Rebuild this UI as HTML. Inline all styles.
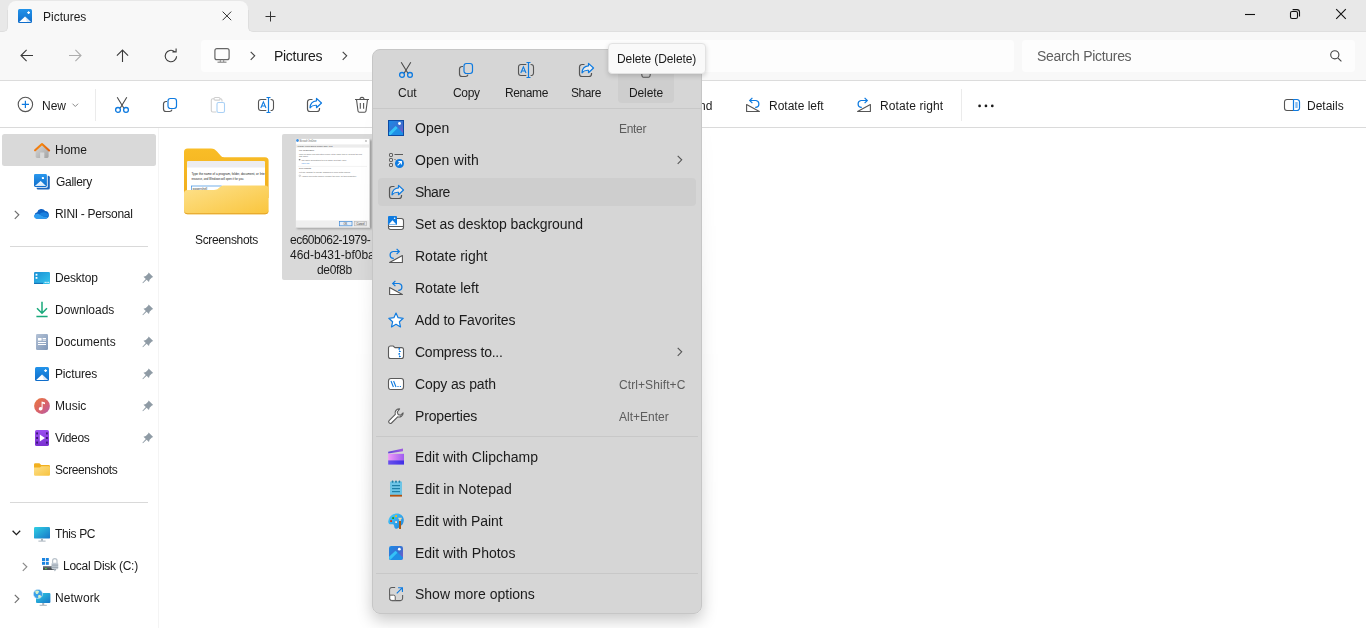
<!DOCTYPE html>
<html>
<head>
<meta charset="utf-8">
<title>Pictures</title>
<style>
*{box-sizing:border-box;margin:0;padding:0}
html,body{width:1366px;height:628px;overflow:hidden;background:#fff}
body{font-family:"Liberation Sans",sans-serif;color:#1a1a1a;position:relative;font-size:12px}
.a{position:absolute}
.t{position:absolute;white-space:pre;line-height:1;color:#1b1b1b;will-change:transform}
svg{position:absolute;overflow:visible}
#titlebar{left:0;top:0;width:1366px;height:32px;background:#e8e8e8}
#tab{left:8px;top:1px;width:240px;height:31px;background:#f8f8f8;border-radius:8px 8px 0 0}
#navbar{left:0;top:32px;width:1366px;height:48px;background:#f8f8f8}
#navline{left:0;top:80px;width:1366px;height:1px;background:#dcdcdc}
#addr{left:201px;top:40px;width:813px;height:32px;background:#fdfdfd;border-radius:4px}
#search{left:1022px;top:40px;width:333px;height:32px;background:#fdfdfd;border-radius:4px}
#toolbar{left:0;top:81px;width:1366px;height:46px;background:#fff}
#toolline{left:0;top:127px;width:1366px;height:1px;background:#dadada}
#sideline{left:158px;top:128px;width:1px;height:500px;background:#f4f4f4}
.sel{background:#d9d9d9;border-radius:2.5px}
.sep{position:absolute;height:1px;background:#d9d9d9}
.vsep{position:absolute;width:1px;background:#ebebeb}
#menu{left:372px;top:49px;width:330px;height:565px;background:#d6d6d6;border-radius:8px;border:1px solid #c6c6c6}
.msep{position:absolute;left:376px;width:322px;height:1px;background:#c8c8c8}
.mi{font-size:14px}
.mk{font-size:12px;color:#5c5c5c}
.sb{font-size:12px}
#tip{left:607.5px;top:43.3px;width:98px;height:31px;background:#f9f9f9;border-radius:4px;border:1px solid #e2e2e2;box-shadow:0 2px 5px rgba(0,0,0,.16)}
</style>
</head>
<body>

<svg width="0" height="0" style="left:-10px;top:-10px">
<defs>
<g id="i-cut" fill="none" stroke-width="1.1">
 <path d="M3.2,0.2 L9.9,11.2 M12.8,0.2 L6.1,11.2" stroke="#4a4a4a"/>
 <circle cx="4" cy="12.9" r="2.4" stroke="#0f7be0" stroke-width="1.3"/><circle cx="12" cy="12.9" r="2.4" stroke="#0f7be0" stroke-width="1.3"/>
</g>
<g id="i-copy" fill="none" stroke-width="1.2">
 <path d="M5,4.5 H4 A2.5,2.5 0 0 0 1.5,7 V12 A2.5,2.5 0 0 0 4,14.5 H7.5 A2.5,2.5 0 0 0 10,12.6" stroke="#555"/>
 <rect x="6" y="1.5" width="8.5" height="10" rx="2.4" stroke="#0f7be0"/>
</g>
<g id="i-rename" fill="none" stroke-width="1.1">
 <path d="M8.3,2.5 H3 A2.5,2.5 0 0 0 0.5,5 V11 A2.5,2.5 0 0 0 3,13.5 H8.3 M12.6,2.5 H13 A2.5,2.5 0 0 1 15.5,5 V11 A2.5,2.5 0 0 1 13,13.5 H12.6" stroke="#555"/>
 <path d="M10.5,0.5 V15.5 M8.5,0.5 H12.5 M8.5,15.5 H12.5" stroke="#0f7be0" stroke-width="1.2"/>
 <path d="M2.8,11 L5.4,4.8 L8,11 M3.8,9 H7" stroke="#0f7be0" stroke-width="1.1"/>
</g>
<g id="i-share" fill="none" stroke-width="1.2">
 <path d="M6.5,2.5 H4 A2.5,2.5 0 0 0 1.5,5 V12 A2.5,2.5 0 0 0 4,14.5 H11 A2.5,2.5 0 0 0 13.5,12 V11" stroke="#555"/>
 <path d="M10.5,1.4 L15.5,6 L10.5,10.7 V8.3 C7.5,8.1 5.4,9 4,10.8 C4.2,7 6.4,4.1 10.5,3.8 Z" stroke="#0f7be0" stroke-linejoin="round" fill="#fff" fill-opacity=".6"/>
</g>
<g id="i-del" fill="none" stroke="#555" stroke-width="1.1">
 <path d="M1,2.5 H15 M6,2.4 A2,2 0 0 1 10,2.4 M2.5,2.5 L4,14 A1.5,1.5 0 0 0 5.5,15.3 H10.5 A1.5,1.5 0 0 0 12,14 L13.5,2.5 M6.3,6 V11.8 M9.6,6 V11.8"/>
</g>
<g id="i-rotl" fill="none" stroke-width="1.1">
 <path d="M0.6,7.6 V14.5 H13.4 Z" stroke="#555" fill="#fff" stroke-linejoin="round"/>
 <path d="M3.8,3.5 H10 A3.5,3.5 0 0 1 10,10.4 H9.2 M6.4,0.9 L3.7,3.5 L6.4,6.1" stroke="#0f7be0" stroke-width="1.2"/>
</g>
<g id="i-rotr" fill="none" stroke-width="1.1">
 <path d="M13.4,7.6 V14.5 H0.6 Z" stroke="#555" fill="#fff" stroke-linejoin="round"/>
 <path d="M10.2,3.5 H4 A3.5,3.5 0 0 0 4,10.4 H4.8 M7.6,0.9 L10.3,3.5 L7.6,6.1" stroke="#0f7be0" stroke-width="1.2"/>
</g>
<linearGradient id="g-ph" x1="0" y1="0" x2="1" y2="1"><stop offset="0" stop-color="#1b8be8"/><stop offset=".55" stop-color="#3a6fd0"/><stop offset="1" stop-color="#8a55c8"/></linearGradient>
<g id="i-photos">
 <rect x="0" y="0" width="16" height="16" fill="#0d4aa3"/>
 <rect x="1" y="1" width="14" height="14" fill="url(#g-ph)"/>
 <path d="M1,13 L8,6 L15,13 V15 H1 Z" fill="#1e8fe6"/>
 <path d="M1,12.6 L7.6,6 L9.6,8 L2.6,15 H1 Z" fill="#35c2f7"/>
 <circle cx="11.5" cy="3.5" r="1.4" fill="#fff"/>
</g>
</defs>
</svg>
<!-- title bar -->
<div class="a" id="titlebar"></div>
<div class="a" style="left:0;top:31px;width:1366px;height:1px;background:#dfdfdf"></div>
<div class="a" id="tab"></div>
<div class="a" style="left:0;top:24px;width:8px;height:8px;background:#f8f8f8"></div>
<div class="a" style="left:0;top:10px;width:8px;height:22px;background:#e8e8e8;border-radius:0 0 5px 0;border-right:1px solid #dedede;border-bottom:1px solid #dedede"></div>
<div class="a" style="left:248px;top:24px;width:8px;height:8px;background:#f8f8f8"></div>
<div class="a" style="left:248px;top:10px;width:8px;height:22px;background:#e8e8e8;border-radius:0 0 0 5px;border-left:1px solid #dedede;border-bottom:1px solid #dedede"></div>
<span class="t" style="left:43px;top:11px;font-size:12px">Pictures</span>


<!-- tab icon -->
<svg style="left:18px;top:9px" width="14" height="14" viewBox="0 0 14 14"><defs><linearGradient id="g-tab" x1="0" y1="0" x2="0" y2="1"><stop offset="0" stop-color="#2293ea"/><stop offset="1" stop-color="#0f6cc9"/></linearGradient></defs>
 <rect x="0" y="0" width="14" height="14" rx="1.5" fill="url(#g-tab)"/>
 <path d="M1.2,13 L7,7.4 L12.8,13 Z" fill="#fff"/><path d="M7,7.4 L12.8,13 H9 Z" fill="#dbe9f7"/>
 <path d="M10.6,2.2 V5 M9.2,3.6 H12" stroke="#fff" stroke-width="1.1"/>
</svg>
<!-- tab close / plus -->
<svg style="left:222px;top:11px" width="10" height="10" viewBox="0 0 10 10"><path d="M0.6,0.6 L9.2,9.2 M9.2,0.6 L0.6,9.2" stroke="#333" stroke-width="1" fill="none"/></svg>
<svg style="left:265px;top:11px" width="11" height="11" viewBox="0 0 11 11"><path d="M5.5,0.5 V10.5 M0.5,5.5 H10.5" stroke="#333" stroke-width="1" fill="none"/></svg>
<!-- window controls -->
<svg style="left:1245px;top:9px" width="10" height="10" viewBox="0 0 10 10"><path d="M0,5.5 H10" stroke="#111" stroke-width="1.1"/></svg>
<svg style="left:1290px;top:9px" width="10" height="10" viewBox="0 0 10 10" fill="none" stroke="#111" stroke-width="1.1"><rect x="0.5" y="2.5" width="7" height="7" rx="1.6"/><path d="M2.6,0.6 H7 A2.5,2.5 0 0 1 9.5,3 V7.4"/></svg>
<svg style="left:1336px;top:9px" width="10" height="10" viewBox="0 0 10 10"><path d="M0.2,0.2 L9.8,9.8 M9.8,0.2 L0.2,9.8" stroke="#111" stroke-width="1.1" fill="none"/></svg>
<!-- nav bar -->
<div class="a" id="navbar"></div>
<div class="a" id="addr"></div>
<div class="a" id="search"></div>
<div class="a" id="navline"></div>
<span class="t" style="left:274px;top:49px;font-size:14px;letter-spacing:-0.3px">Pictures</span>
<span class="t" style="left:1037px;top:49px;font-size:14px;letter-spacing:-0.3px;color:#5f5f5f">Search Pictures</span>


<!-- nav icons -->
<svg style="left:20px;top:49px" width="14" height="13" viewBox="0 0 14 13" fill="none" stroke="#3a3a3a" stroke-width="1.1"><path d="M1,6.5 H13 M6.6,0.9 L1,6.5 L6.6,12.1"/></svg>
<svg style="left:68px;top:49px" width="14" height="13" viewBox="0 0 14 13" fill="none" stroke="#adadad" stroke-width="1.1"><path d="M1,6.5 H13 M7.4,0.9 L13,6.5 L7.4,12.1"/></svg>
<svg style="left:116px;top:49px" width="13" height="14" viewBox="0 0 13 14" fill="none" stroke="#3a3a3a" stroke-width="1.1"><path d="M6.5,1 V13 M0.9,6.6 L6.5,1 L12.1,6.6"/></svg>
<svg style="left:164px;top:49px" width="14" height="14" viewBox="0 0 14 14" fill="none" stroke="#3a3a3a" stroke-width="1.1"><path d="M12.6,7.2 A5.7,5.7 0 1 1 10.6,2.7 M8.4,2.9 H12.1 V-0.6" stroke-linejoin="miter"/></svg>
<svg style="left:214px;top:48px" width="16" height="15" viewBox="0 0 16 15" fill="none" stroke="#666" stroke-width="1.2"><rect x="0.9" y="0.7" width="14.2" height="11" rx="2"/><path d="M3.5,14.2 H12.5" stroke="#8a8a8a"/><path d="M6.3,11.8 V14 M9.7,11.8 V14" stroke="#8a8a8a" stroke-width="1"/></svg>
<svg style="left:250px;top:51px" width="6" height="10" viewBox="0 0 6 10" fill="none" stroke="#444" stroke-width="1.1"><path d="M0.7,0.8 L4.7,4.8 L0.7,8.8"/></svg>
<svg style="left:342px;top:51px" width="6" height="10" viewBox="0 0 6 10" fill="none" stroke="#444" stroke-width="1.1"><path d="M0.7,0.8 L4.7,4.8 L0.7,8.8"/></svg>
<svg style="left:1329px;top:49px" width="14" height="14" viewBox="0 0 14 14" fill="none" stroke="#444" stroke-width="1.1"><circle cx="5.8" cy="5.8" r="4.1"/><path d="M8.8,8.8 L12.4,12.4"/></svg>
<!-- toolbar -->
<div class="a" id="toolbar"></div>
<div class="a" id="toolline"></div>
<span class="t" style="left:42px;top:100px;font-size:12px">New</span>
<div class="vsep" style="left:95px;top:89px;height:32px"></div>
<span class="t" style="left:698.5px;top:100px;font-size:12px">nd</span>
<span class="t" style="left:769px;top:100px;font-size:12px">Rotate left</span>
<span class="t" style="left:879.5px;top:100px;font-size:12px;letter-spacing:.1px">Rotate right</span>
<div class="vsep" style="left:961px;top:89px;height:32px"></div>
<span class="t" style="left:1307px;top:100px;font-size:12px">Details</span>


<!-- toolbar icons -->
<svg style="left:17px;top:96px" width="17" height="17" viewBox="0 0 17 17" fill="none"><circle cx="8.4" cy="8.4" r="7.2" stroke="#555" stroke-width="1.1"/><path d="M8.4,4.8 V12 M4.8,8.4 H12" stroke="#0f7be0" stroke-width="1.2"/></svg>
<svg style="left:72px;top:103px" width="7" height="5" viewBox="0 0 7 5" fill="none" stroke="#8a8a8a" stroke-width="1"><path d="M0.5,0.7 L3.3,3.5 L6.1,0.7"/></svg>
<svg style="left:114px;top:97px" width="16" height="16" viewBox="0 0 16 16"><use href="#i-cut"/></svg>
<svg style="left:162px;top:97px" width="16" height="16" viewBox="0 0 16 16"><use href="#i-copy"/></svg>
<svg style="left:210px;top:97px" width="16" height="16" viewBox="0 0 16 16" fill="none" stroke-width="1.1"><path d="M4,1.8 H2.8 A1.5,1.5 0 0 0 1.3,3.3 V13.5 A1.5,1.5 0 0 0 2.8,15 H6.4 M10,1.8 H10.5 A1.5,1.5 0 0 1 12,3.3 V4.6" stroke="#cfcfcf"/><rect x="4" y="0.5" width="6" height="2.6" rx="1.2" stroke="#cfcfcf"/><rect x="7" y="5.5" width="7.5" height="10" rx="1.6" stroke="#a9d0f5"/></svg>
<svg style="left:258px;top:97px" width="16" height="16" viewBox="0 0 16 16"><use href="#i-rename"/></svg>
<svg style="left:306px;top:97px" width="16" height="16" viewBox="0 0 16 16"><use href="#i-share"/></svg>
<svg style="left:354px;top:97px" width="16" height="16" viewBox="0 0 16 16"><use href="#i-del"/></svg>
<svg style="left:746px;top:97px" width="14" height="15" viewBox="0 0 14 15"><use href="#i-rotl"/></svg>
<svg style="left:857px;top:97px" width="14" height="15" viewBox="0 0 14 15"><use href="#i-rotr"/></svg>
<svg style="left:978px;top:104px" width="16" height="4" viewBox="0 0 16 4" fill="#1a1a1a"><circle cx="1.6" cy="1.9" r="1.35"/><circle cx="7.95" cy="1.9" r="1.35"/><circle cx="14.3" cy="1.9" r="1.35"/></svg>
<svg style="left:1284px;top:99px" width="16" height="12" viewBox="0 0 16 12" fill="none" stroke-width="1.1"><path d="M9.5,0.5 H3 A2.5,2.5 0 0 0 0.5,3 V9 A2.5,2.5 0 0 0 3,11.5 H9.5" stroke="#555"/><path d="M9.5,0.5 H13 A2.5,2.5 0 0 1 15.5,3 V9 A2.5,2.5 0 0 1 13,11.5 H9.5 Z" stroke="#0f7be0" stroke-width="1.2"/><path d="M11.3,4 H13.7 M11.3,6 H13.7 M11.3,8 H13.7" stroke="#0f7be0" stroke-width="1"/></svg>
<!-- sidebar -->
<div class="a" id="sideline"></div>
<div class="a sel" style="left:2px;top:134px;width:154px;height:31.6px"></div>
<span class="t sb" style="left:55px;top:144px">Home</span>
<span class="t sb" style="left:55.5px;top:176px;letter-spacing:-.3px">Gallery</span>
<span class="t sb" style="left:55px;top:208px;letter-spacing:-.3px">RINI - Personal</span>
<div class="sep" style="left:10px;top:246px;width:138px"></div>
<span class="t sb" style="left:55px;top:272px;letter-spacing:-.2px">Desktop</span>
<span class="t sb" style="left:55px;top:304px">Downloads</span>
<span class="t sb" style="left:55px;top:336px">Documents</span>
<span class="t sb" style="left:55px;top:368px;letter-spacing:-.15px">Pictures</span>
<span class="t sb" style="left:55px;top:400px">Music</span>
<span class="t sb" style="left:55.4px;top:432px;letter-spacing:-.35px">Videos</span>
<span class="t sb" style="left:55.2px;top:464px;letter-spacing:-.4px">Screenshots</span>
<div class="sep" style="left:10px;top:502px;width:138px"></div>
<span class="t sb" style="left:54.8px;top:528px;letter-spacing:-.36px">This PC</span>
<span class="t sb" style="left:63px;top:560px;letter-spacing:-.25px">Local Disk (C:)</span>
<span class="t sb" style="left:55px;top:592px;letter-spacing:.14px">Network</span>


<!-- sidebar icons -->
<svg style="left:34px;top:142px" width="17" height="17" viewBox="0 0 17 17"><defs><linearGradient id="g-hm" x1="0" y1="0" x2="1" y2="1"><stop offset="0" stop-color="#d8d8d8"/><stop offset="1" stop-color="#a2a2a2"/></linearGradient><linearGradient id="g-hr" x1="0" y1="0" x2="1" y2="0"><stop offset="0" stop-color="#f07a12"/><stop offset=".45" stop-color="#f5850c"/><stop offset="1" stop-color="#e05f0c"/></linearGradient></defs><path d="M1.6,8.6 L8,2.8 L14.6,8.6 V14.5 A1.4,1.4 0 0 1 13.2,15.9 H10.3 V10.4 H6.1 V15.9 H3 A1.4,1.4 0 0 1 1.6,14.5 Z" fill="url(#g-hm)"/><path d="M1.1,8.3 L8,2 L15.1,8.5" fill="none" stroke="url(#g-hr)" stroke-width="2.1" stroke-linecap="round" stroke-linejoin="round"/></svg>
<svg style="left:34px;top:174px" width="16" height="16" viewBox="0 0 16 16"><defs><linearGradient id="g-gl" x1="0" y1="0" x2="0" y2="1"><stop offset="0" stop-color="#2a98ee"/><stop offset="1" stop-color="#0f6cc9"/></linearGradient><linearGradient id="g-gm" x1="0" y1="0" x2="0" y2="1"><stop offset="0" stop-color="#fff"/><stop offset="1" stop-color="#cfe5fa"/></linearGradient></defs><rect x="2.6" y="1.8" width="13.2" height="13.8" rx="1.5" fill="#1c66bd"/><rect x="0" y="0" width="13.7" height="13.7" rx="1.5" fill="#fff"/><rect x="0" y="0" width="12.9" height="12.9" rx="1.3" fill="url(#g-gl)"/><path d="M0.8,12.1 L6.7,7 L12.1,12.1 Z" fill="url(#g-gm)"/><rect x="7.9" y="3" width="2.1" height="2.1" rx=".4" fill="#fff"/></svg>
<svg style="left:33.1px;top:208.3px" width="16.5" height="11.3" viewBox="0 0 17 12"><path d="M4.2,4.6 A4.6,4.6 0 0 1 12.6,3.2 A3.9,3.9 0 0 1 16.6,7.2 A3.6,3.6 0 0 1 13,11.4 H3.8 A3.5,3.5 0 0 1 4.2,4.6 Z" fill="#0f62c4"/><path d="M0.6,8.6 C1.4,6.4 4,5.4 6.4,6.6 L12,9.6 L15.8,9.4 A3.6,3.6 0 0 1 13,11.4 H3.8 A3.4,3.4 0 0 1 0.6,8.6 Z" fill="#2f9df0"/><path d="M6.4,6.6 C8.4,4.4 12,3.6 14.6,5.6 A3.8,3.8 0 0 1 16.4,8.6 L12,9.6 Z" fill="#1b80de"/></svg>
<svg style="left:14px;top:210px" width="6" height="10" viewBox="0 0 6 10" fill="none" stroke="#6e6e6e" stroke-width="1.2"><path d="M0.8,0.8 L4.8,4.8 L0.8,8.8"/></svg>
<!-- desktop -->
<svg style="left:34px;top:272px" width="16" height="12" viewBox="0 0 16 12"><defs><linearGradient id="g-dt" x1="0" y1="0" x2="1" y2="1"><stop offset="0" stop-color="#1b8fd4"/><stop offset="1" stop-color="#36c6ee"/></linearGradient></defs><rect x="0" y="0" width="16" height="12" rx="1.2" fill="url(#g-dt)"/><rect x="1.6" y="1.8" width="1.8" height="1.8" fill="#fff"/><rect x="1.6" y="5" width="1.8" height="1.8" fill="#fff"/><rect x="10.6" y="9.8" width="1.2" height="1.2" fill="#e6f7ff"/><rect x="12.4" y="9.8" width="1.2" height="1.2" fill="#e6f7ff"/><rect x="14.2" y="9.8" width="1" height="1.2" fill="#e6f7ff"/><rect x="0" y="10.8" width="9" height="1.2" fill="#1474b8"/></svg>
<!-- downloads -->
<svg style="left:36px;top:301px" width="12" height="17" viewBox="0 0 12 17" fill="none" stroke="#19a97b" stroke-width="1.5"><path d="M6,0.8 V12 M1,7.2 L6,12.2 L11,7.2 M0.4,15.6 H11.6"/></svg>
<!-- documents -->
<svg style="left:36px;top:334px" width="12" height="16" viewBox="0 0 12 16"><defs><linearGradient id="g-dc" x1="0" y1="0" x2="1" y2="1"><stop offset="0" stop-color="#b4c2d6"/><stop offset="1" stop-color="#7f97b8"/></linearGradient></defs><rect x="0" y="0" width="12" height="16" rx="1.2" fill="url(#g-dc)"/><g fill="#fff"><rect x="2" y="4" width="3.6" height="2.6"/><rect x="6.6" y="4" width="3.4" height="1"/><rect x="6.6" y="5.6" width="3.4" height="1"/><rect x="2" y="8" width="8" height="1"/><rect x="2" y="10" width="8" height="1"/></g></svg>
<!-- pictures -->
<svg style="left:35px;top:367px" width="14" height="14" viewBox="0 0 14 14"><rect x="0" y="0" width="14" height="14" rx="1.5" fill="url(#g-tab)"/><path d="M1.2,13 L7,7.4 L12.8,13 Z" fill="#fff"/><path d="M7,7.4 L12.8,13 H9 Z" fill="#dbe9f7"/><path d="M10.6,2.2 V5 M9.2,3.6 H12" stroke="#fff" stroke-width="1.1"/></svg>
<!-- music -->
<svg style="left:34px;top:398px" width="16" height="16" viewBox="0 0 16 16"><defs><linearGradient id="g-mu" x1="0" y1="0" x2="1" y2="1"><stop offset="0" stop-color="#ea7a3c"/><stop offset=".55" stop-color="#d9626a"/><stop offset="1" stop-color="#b45cb0"/></linearGradient></defs><circle cx="8" cy="8" r="7.9" fill="url(#g-mu)"/><path d="M7.6,3.6 L11,4.6 V6.2 L8.6,5.6 V10.6 A1.9,1.7 0 1 1 7.6,9.2 Z" fill="#fff"/></svg>
<!-- videos -->
<svg style="left:35px;top:430px" width="14" height="16" viewBox="0 0 14 16"><defs><linearGradient id="g-vd" x1="0" y1="0" x2="0" y2="1"><stop offset="0" stop-color="#9a4ff0"/><stop offset="1" stop-color="#7a30d0"/></linearGradient></defs><rect x="0" y="0" width="14" height="16" rx="1.6" fill="url(#g-vd)"/><g fill="#3b1676"><rect x="1.2" y="2.4" width="1.8" height="2"/><rect x="1.2" y="7" width="1.8" height="2"/><rect x="1.2" y="11.6" width="1.8" height="2"/><rect x="11" y="2.4" width="1.8" height="2"/><rect x="11" y="7" width="1.8" height="2"/><rect x="11" y="11.6" width="1.8" height="2"/></g><path d="M4.8,4.6 L10,8 L4.8,11.4 Z" fill="#fff"/></svg>
<!-- folder small -->
<svg style="left:34px;top:463px" width="16" height="13" viewBox="0 0 16 13"><defs><linearGradient id="g-fs" x1="0" y1="0" x2="1" y2="1"><stop offset="0" stop-color="#fde08a"/><stop offset="1" stop-color="#f7c23e"/></linearGradient></defs><path d="M0,1.4 A1.2,1.2 0 0 1 1.2,0.2 H5.4 L7.2,2 H14.8 A1.2,1.2 0 0 1 16,3.2 V6 H0 Z" fill="#f2b01f"/><path d="M0,4.4 H6 L7.4,3.2 H14.8 A1.2,1.2 0 0 1 16,4.4 V11.6 A1.2,1.2 0 0 1 14.8,12.8 H1.2 A1.2,1.2 0 0 1 0,11.6 Z" fill="url(#g-fs)"/></svg>
<!-- this pc -->
<svg style="left:12.2px;top:530.4px" width="9" height="6" viewBox="0 0 9 6" fill="none" stroke="#1f1f1f" stroke-width="1.3"><path d="M0.6,0.8 L4.4,4.6 L8.2,0.8"/></svg>
<svg style="left:34px;top:527px" width="16" height="15" viewBox="0 0 16 15"><defs><linearGradient id="g-pc" x1="0" y1="0" x2="1" y2="1"><stop offset="0" stop-color="#30d0e4"/><stop offset="1" stop-color="#1876c8"/></linearGradient></defs><rect x="0" y="0" width="16" height="11.6" rx="1.2" fill="url(#g-pc)"/><rect x="7" y="11.6" width="2" height="2.2" fill="#a9b3bd"/><rect x="4.4" y="13.6" width="7.2" height="1" fill="#a9b3bd"/></svg>
<svg style="left:22px;top:562px" width="6" height="10" viewBox="0 0 6 10" fill="none" stroke="#8a8a8a" stroke-width="1.2"><path d="M0.8,0.8 L4.8,4.8 L0.8,8.8"/></svg>
<!-- local disk -->
<svg style="left:42px;top:558px" width="17" height="14" viewBox="0 0 17 14"><g fill="#1b84e0"><rect x="0" y="0" width="3" height="3"/><rect x="3.8" y="0" width="3" height="3"/><rect x="0" y="3.8" width="3" height="3"/><rect x="3.8" y="3.8" width="3" height="3"/></g><rect x="1" y="8.2" width="13" height="3.8" rx=".6" fill="#4a4f55"/><rect x="1" y="8.2" width="13" height="1.2" fill="#7d858d"/><rect x="3.2" y="10" width="1.4" height="1.2" fill="#52e04a"/><path d="M10.6,5 V2.8 A2.2,2.2 0 0 1 15,2.8 V5" fill="none" stroke="#b9c2cb" stroke-width="1.2"/><rect x="9.6" y="4.8" width="6.6" height="6.4" rx=".8" fill="#c3ccd5"/><rect x="9.6" y="6.6" width="6.6" height="1" fill="#98a3ae"/><rect x="9.6" y="8.8" width="6.6" height="1" fill="#98a3ae"/><path d="M11.4,11.2 L12.9,13.6 L14.4,11.2 Z" fill="#aeb8c2"/></svg>
<svg style="left:14px;top:594px" width="6" height="10" viewBox="0 0 6 10" fill="none" stroke="#6e6e6e" stroke-width="1.2"><path d="M0.8,0.8 L4.8,4.8 L0.8,8.8"/></svg>
<!-- network -->
<svg style="left:33px;top:589px" width="18" height="18" viewBox="0 0 18 18"><rect x="3" y="4" width="14.4" height="10" rx="1" fill="url(#g-pc)"/><rect x="9.2" y="14" width="2" height="2" fill="#a9b3bd"/><rect x="6.6" y="15.8" width="7.2" height="1" fill="#a9b3bd"/><circle cx="5" cy="5" r="4.6" fill="#3aa0e8"/><path d="M2.2,2.2 C3.6,1.2 5.4,1.4 6.2,2.6 C5.2,3.6 5.6,4.6 4.4,5 C3.2,5.4 2.4,4.2 2.2,2.2 Z M5.6,6 C6.8,5.6 8,6.2 8.4,7.4 C7.6,8.6 6.4,9.2 5.4,9 C5,8 5,6.8 5.6,6 Z" fill="#d6f0c8"/><circle cx="5" cy="5" r="4.6" fill="none" stroke="#cfe6f7" stroke-width=".6"/></svg>
<svg style="left:142px;top:272px" width="11.6" height="11.6" viewBox="0 0 11 11"><path d="M6.3,0.4 L10.6,4.7 L9.4,5.2 L7.2,7.4 L6.6,9.6 L4.4,7.4 L0.9,10.6 L0.4,10.1 L3.6,6.6 L1.4,4.4 L3.6,3.8 L5.8,1.6 Z" fill="#8f9ba5"/></svg>
<svg style="left:142px;top:304px" width="11.6" height="11.6" viewBox="0 0 11 11"><path d="M6.3,0.4 L10.6,4.7 L9.4,5.2 L7.2,7.4 L6.6,9.6 L4.4,7.4 L0.9,10.6 L0.4,10.1 L3.6,6.6 L1.4,4.4 L3.6,3.8 L5.8,1.6 Z" fill="#8f9ba5"/></svg>
<svg style="left:142px;top:336px" width="11.6" height="11.6" viewBox="0 0 11 11"><path d="M6.3,0.4 L10.6,4.7 L9.4,5.2 L7.2,7.4 L6.6,9.6 L4.4,7.4 L0.9,10.6 L0.4,10.1 L3.6,6.6 L1.4,4.4 L3.6,3.8 L5.8,1.6 Z" fill="#8f9ba5"/></svg>
<svg style="left:142px;top:368px" width="11.6" height="11.6" viewBox="0 0 11 11"><path d="M6.3,0.4 L10.6,4.7 L9.4,5.2 L7.2,7.4 L6.6,9.6 L4.4,7.4 L0.9,10.6 L0.4,10.1 L3.6,6.6 L1.4,4.4 L3.6,3.8 L5.8,1.6 Z" fill="#8f9ba5"/></svg>
<svg style="left:142px;top:400px" width="11.6" height="11.6" viewBox="0 0 11 11"><path d="M6.3,0.4 L10.6,4.7 L9.4,5.2 L7.2,7.4 L6.6,9.6 L4.4,7.4 L0.9,10.6 L0.4,10.1 L3.6,6.6 L1.4,4.4 L3.6,3.8 L5.8,1.6 Z" fill="#8f9ba5"/></svg>
<svg style="left:142px;top:432px" width="11.6" height="11.6" viewBox="0 0 11 11"><path d="M6.3,0.4 L10.6,4.7 L9.4,5.2 L7.2,7.4 L6.6,9.6 L4.4,7.4 L0.9,10.6 L0.4,10.1 L3.6,6.6 L1.4,4.4 L3.6,3.8 L5.8,1.6 Z" fill="#8f9ba5"/></svg>
<!-- content -->

<!-- big folder -->
<svg style="left:184px;top:148px" width="85" height="67" viewBox="0 0 85 67">
<defs><linearGradient id="g-ff" x1="0" y1="0" x2="1" y2="1"><stop offset="0" stop-color="#fde18c"/><stop offset="1" stop-color="#fac53c"/></linearGradient>
<linearGradient id="g-fb" x1="0" y1="0" x2="0" y2="1"><stop offset="0" stop-color="#f9bd27"/><stop offset="1" stop-color="#f0ad1c"/></linearGradient></defs>
<path d="M0,4 A3.6,3.6 0 0 1 3.6,0.4 H27 C30,0.4 31,1.4 33,3.6 L37,8 C37.8,8.8 38.6,9.2 40,9.2 H81 A3.6,3.6 0 0 1 84.6,12.8 V50 H0 Z" fill="url(#g-fb)"/>
<rect x="3" y="13" width="78" height="36" rx="1.6" fill="#fff"/>
<path d="M3,14.6 A1.6,1.6 0 0 1 4.6,13 H79.4 A1.6,1.6 0 0 1 81,14.6 V19.4 H3 Z" fill="#ececf0"/>
<g fill="#222" font-family="Liberation Sans, sans-serif" font-size="3.3"><text x="7.4" y="27.2" textLength="73.4" lengthAdjust="spacingAndGlyphs">Type the name of a program, folder, document, or Inte</text><text x="7.4" y="32" textLength="52.6" lengthAdjust="spacingAndGlyphs">resource, and Windows will open it for you.</text></g>
<rect x="7.6" y="38" width="30" height="5" fill="#fff" stroke="#3b8ee0" stroke-width=".7"/><text x="8.8" y="41.6" font-family="Liberation Sans, sans-serif" font-size="3" fill="#333">powershell</text>
<path d="M0,45.6 A3.6,3.6 0 0 1 3.6,42 H30 C32,42 33,41.6 34.2,40.6 L36.4,38.8 C37.4,38 38.4,37.6 40,37.6 H81 A3.6,3.6 0 0 1 84.6,41.2 V62.6 A3.6,3.6 0 0 1 81,66.2 H3.6 A3.6,3.6 0 0 1 0,62.6 Z" fill="url(#g-ff)"/>
<path d="M0,62 V62.6 A3.6,3.6 0 0 0 3.6,66.2 H81 A3.6,3.6 0 0 0 84.6,62.6 V62 A3.6,3.6 0 0 1 81,65.2 H3.6 A3.6,3.6 0 0 1 0,62 Z" fill="#e3a227"/>
</svg>
<span class="t sb" style="left:195px;top:234px;letter-spacing:-.35px">Screenshots</span>
<div class="a" style="left:282px;top:134px;width:100px;height:146px;background:#d9d9d9;border-radius:2px"></div>

<!-- thumbnail -->
<div class="a" style="left:296.5px;top:139.5px;width:75px;height:89.5px;background:#7a7a7a;opacity:.6;filter:blur(.9px)"></div>
<div class="a" style="left:295px;top:138px;width:75px;height:89.5px;background:#fff;border:1px solid #dcdcdc"></div>
<svg style="left:295px;top:138px" width="75" height="90" viewBox="0 0 75 90" font-family="Liberation Sans, sans-serif">
<circle cx="2.5" cy="2.5" r="1.4" fill="#3d8fe0"/>
<text x="4.4" y="4" font-size="2.8" fill="#555" textLength="17" lengthAdjust="spacingAndGlyphs">Microsoft OneDrive</text>
<path d="M70.2,2.2 L71.8,3.8 M71.8,2.2 L70.2,3.8" stroke="#666" stroke-width=".4"/>
<rect x="1" y="6.4" width="73" height="3.2" fill="#ececec"/>
<text x="2.6" y="9" font-size="2.5" fill="#444" textLength="35" lengthAdjust="spacingAndGlyphs">Settings  Account  Backup  Network  Office  About</text>
<text x="4" y="13.4" font-size="2.5" fill="#333" textLength="15" lengthAdjust="spacingAndGlyphs">File collaboration</text>
<text x="4" y="17" font-size="2.4" fill="#666" textLength="63" lengthAdjust="spacingAndGlyphs">Work on Office files with other people at the same time by syncing the files</text>
<text x="4" y="19.4" font-size="2.4" fill="#666" textLength="9" lengthAdjust="spacingAndGlyphs">with Office</text>
<rect x="4" y="21.2" width="1.6" height="1.6" fill="none" stroke="#777" stroke-width=".3"/>
<text x="6.4" y="22.8" font-size="2.4" fill="#666" textLength="45" lengthAdjust="spacingAndGlyphs">Use Office applications to sync Office files that I open</text>
<text x="6.4" y="25.6" font-size="2.4" fill="#3b86dc" textLength="8" lengthAdjust="spacingAndGlyphs">More info</text>
<path d="M3,28.4 H72" stroke="#e6e6e6" stroke-width=".5"/>
<text x="4" y="31.4" font-size="2.5" fill="#333" textLength="12" lengthAdjust="spacingAndGlyphs">Sync conflicts</text>
<text x="4" y="35" font-size="2.4" fill="#666" textLength="51" lengthAdjust="spacingAndGlyphs">Let me choose to merge changes or keep both copies</text>
<circle cx="4.8" cy="37.8" r=".8" fill="none" stroke="#777" stroke-width=".3"/>
<text x="6.4" y="38.6" font-size="2.4" fill="#666" textLength="55" lengthAdjust="spacingAndGlyphs">Always keep both copies (rename the copy on this computer)</text>
<rect x="1" y="82.4" width="73" height="6.6" fill="#efefef"/>
<rect x="44.4" y="83.6" width="12.6" height="4.2" fill="#e4edf8" stroke="#3f8ad8" stroke-width=".7"/>
<text x="48.6" y="86.8" font-size="2.6" fill="#333">OK</text>
<rect x="59.6" y="83.6" width="12" height="4.2" fill="#e6e6e6" stroke="#b4b4b4" stroke-width=".6"/>
<text x="61.6" y="86.8" font-size="2.6" fill="#333" textLength="8" lengthAdjust="spacingAndGlyphs">Cancel</text>
</svg>
<span class="t sb" style="left:290.3px;top:234px;letter-spacing:-.52px">ec60b062-1979-</span>
<span class="t sb" style="left:289.5px;top:249px">46d-b431-bf0ba</span>
<span class="t sb" style="left:317px;top:264px;letter-spacing:-.33px">de0f8b</span>

<!-- context menu -->
<div class="a" style="left:332px;top:9px;width:410px;height:645px;-webkit-mask-image:linear-gradient(to bottom,transparent 90px,#000 600px);mask-image:linear-gradient(to bottom,transparent 90px,#000 600px)"><div class="a" style="left:40px;top:40px;width:330px;height:565px;border-radius:8px;box-shadow:0 6px 16px rgba(0,0,0,.22)"></div></div>
<div class="a" id="menu"></div>
<div class="a" style="left:618px;top:56px;width:56px;height:47px;background:#cecece;border-radius:4px"></div>
<span class="t" style="left:397.5px;top:87px;font-size:12px">Cut</span>
<span class="t" style="left:453px;top:87px;font-size:12px;letter-spacing:-.3px">Copy</span>
<span class="t" style="left:504.7px;top:87px;font-size:12px;letter-spacing:-.4px">Rename</span>
<span class="t" style="left:570.6px;top:87px;font-size:12px;letter-spacing:-.42px">Share</span>
<span class="t" style="left:629px;top:87px;font-size:12px;letter-spacing:-.12px">Delete</span>
<div class="msep" style="top:108px;left:373px;width:328px"></div>
<div class="a" style="left:378px;top:178px;width:318px;height:28px;background:#cecece;border-radius:4px"></div>
<span class="t mi" style="left:415px;top:121px">Open</span>
<span class="t mk" style="left:618.6px;top:123px;letter-spacing:-.3px">Enter</span>
<span class="t mi" style="left:415px;top:153px;word-spacing:.7px">Open with</span>
<span class="t mi" style="left:415px;top:185px;letter-spacing:-.5px">Share</span>
<span class="t mi" style="left:415px;top:217px;letter-spacing:-.07px">Set as desktop background</span>
<span class="t mi" style="left:415.1px;top:249px">Rotate right</span>
<span class="t mi" style="left:415.1px;top:281px">Rotate left</span>
<span class="t mi" style="left:415.4px;top:313px;letter-spacing:-.1px">Add to Favorites</span>
<span class="t mi" style="left:415.4px;top:345px;letter-spacing:-.24px">Compress to...</span>
<span class="t mi" style="left:415.4px;top:377px;letter-spacing:-.13px">Copy as path</span>
<span class="t mk" style="left:619px;top:379px;letter-spacing:.09px">Ctrl+Shift+C</span>
<span class="t mi" style="left:414.5px;top:409px;letter-spacing:-.17px">Properties</span>
<span class="t mk" style="left:619px;top:411px">Alt+Enter</span>
<div class="msep" style="top:436px"></div>
<span class="t mi" style="left:415.1px;top:450px">Edit with Clipchamp</span>
<span class="t mi" style="left:415.1px;top:482px;letter-spacing:.07px">Edit in Notepad</span>
<span class="t mi" style="left:415.1px;top:514px;letter-spacing:-.07px">Edit with Paint</span>
<span class="t mi" style="left:415.1px;top:546px">Edit with Photos</span>
<div class="msep" style="top:573px"></div>
<span class="t mi" style="left:415.1px;top:587px">Show more options</span>


<!-- menu icons -->
<svg style="left:398px;top:62px" width="16" height="16" viewBox="0 0 16 16"><use href="#i-cut"/></svg>
<svg style="left:458px;top:62px" width="16" height="16" viewBox="0 0 16 16"><use href="#i-copy"/></svg>
<svg style="left:518px;top:62px" width="16" height="16" viewBox="0 0 16 16"><use href="#i-rename"/></svg>
<svg style="left:578px;top:62px" width="16" height="16" viewBox="0 0 16 16"><use href="#i-share"/></svg>
<svg style="left:638px;top:62px" width="16" height="16" viewBox="0 0 16 16"><use href="#i-del"/></svg>
<svg style="left:388px;top:120px" width="16" height="16" viewBox="0 0 16 16"><use href="#i-photos"/></svg>
<!-- open with -->
<svg style="left:388px;top:152px" width="16" height="16" viewBox="0 0 16 16" fill="none"><g stroke="#5a5a5a" stroke-width="1"><rect x="1.5" y="1.5" width="3" height="3" rx=".6"/><rect x="1.5" y="6.5" width="3" height="3" rx=".6"/><rect x="1.5" y="11.5" width="3" height="3" rx=".6"/><path d="M6.5,2.5 H15"/><path d="M6.5,7.5 H7.5"/></g><circle cx="11.5" cy="11.5" r="4.5" fill="#0f7be0"/><path d="M9.6,13.4 L13.3,9.7 M10.4,9.6 H13.4 V12.6" stroke="#fff" stroke-width="1.1"/></svg>
<svg style="left:388px;top:184px" width="16" height="16" viewBox="0 0 16 16"><use href="#i-share"/></svg>
<!-- set as desktop bg -->
<svg style="left:388px;top:215px" width="16" height="16" viewBox="0 0 16 16" fill="none"><rect x="0.5" y="3.5" width="15" height="11" rx="2.2" fill="#fff" stroke="#5a5a5a" stroke-width="1.1"/><path d="M1,11.5 H15" stroke="#5a5a5a" stroke-width="1"/><rect x="0" y="1" width="9" height="9" rx="1" fill="#0f7be0"/><path d="M0.6,9.4 L4.5,5.2 L8.4,9.4 Z" fill="#fff"/><circle cx="6.6" cy="3.2" r=".8" fill="#fff"/></svg>
<svg style="left:389px;top:248px" width="14" height="15" viewBox="0 0 14 15"><use href="#i-rotr"/></svg>
<svg style="left:389px;top:280px" width="14" height="15" viewBox="0 0 14 15"><use href="#i-rotl"/></svg>
<!-- star -->
<svg style="left:388px;top:312px" width="16" height="16" viewBox="0 0 16 16"><path d="M8,1 L10.1,5.7 L15.2,6.3 L11.4,9.8 L12.5,14.9 L8,12.3 L3.5,14.9 L4.6,9.8 L0.8,6.3 L5.9,5.7 Z" fill="#fff" stroke="#0f7be0" stroke-width="1.2" stroke-linejoin="round"/></svg>
<!-- compress -->
<svg style="left:388px;top:344px" width="16" height="16" viewBox="0 0 16 16" fill="none"><path d="M0.5,4 A2,2 0 0 1 2.5,2 H5.2 L7,3.6 H13.5 A2,2 0 0 1 15.5,5.6 V12.5 A2,2 0 0 1 13.5,14.5 H2.5 A2,2 0 0 1 0.5,12.5 Z" fill="#fff" stroke="#5a5a5a" stroke-width="1.1"/><path d="M11.5,3.8 V14.2" stroke="#0f7be0" stroke-width="1.1" stroke-dasharray="1.6 1"/><path d="M10.2,5 H11.5 M11.5,7.5 H12.8 M10.2,10 H11.5 M11.5,12.5 H12.8" stroke="#0f7be0" stroke-width="1"/></svg>
<!-- copy as path -->
<svg style="left:388px;top:376px" width="16" height="16" viewBox="0 0 16 16" fill="none"><rect x="0.5" y="2.5" width="15" height="11" rx="2.4" fill="#fff" stroke="#5a5a5a" stroke-width="1.1"/><path d="M3,5 L5.4,11 M5.6,5 L8,11" stroke="#0f7be0" stroke-width="1.1"/><path d="M9.4,10.5 H10.6 M11.8,10.5 H13" stroke="#0f7be0" stroke-width="1.2"/></svg>
<!-- properties wrench -->
<svg style="left:388px;top:408px" width="16" height="16" viewBox="0 0 16 16"><path d="M11.2,0.9 A4.1,4.1 0 0 0 7.3,6.4 L1.1,12.6 A1.7,1.7 0 0 0 3.5,15 L9.7,8.8 A4.1,4.1 0 0 0 15.1,4.9 L12.6,7.2 L10.2,6.6 L9.2,4 L11.6,1 Z" fill="#fff" stroke="#5a5a5a" stroke-width="1.1" stroke-linejoin="round"/></svg>
<!-- clipchamp -->
<svg style="left:388px;top:448px" width="16" height="17" viewBox="0 0 16 17"><defs><linearGradient id="g-cc1" x1="0" y1="0" x2="1" y2="0"><stop offset="0" stop-color="#5b46d8"/><stop offset="1" stop-color="#a35be0"/></linearGradient><linearGradient id="g-cc2" x1="0" y1="0" x2="1" y2="0"><stop offset="0" stop-color="#f09af8"/><stop offset="1" stop-color="#9f5cf0"/></linearGradient><linearGradient id="g-cc3" x1="0" y1="0" x2="1" y2="0"><stop offset="0" stop-color="#6a50ec"/><stop offset="1" stop-color="#3f2ee6"/></linearGradient></defs>
<path d="M0.2,3.7 L15,0.6 V3.2 L0.2,5.6 Z" fill="url(#g-cc1)"/><rect x="0.2" y="5.8" width="15.8" height="7" fill="url(#g-cc2)"/><rect x="0.2" y="12.4" width="15.8" height="4.2" fill="url(#g-cc3)"/></svg>
<!-- notepad -->
<svg style="left:390px;top:480px" width="12" height="17" viewBox="0 0 12 17"><rect x="0" y="1.6" width="12" height="14" rx=".6" fill="#6ec5e6"/><rect x="0" y="14.8" width="12" height="1.8" fill="#b4520f"/><g fill="#1d7fa6"><rect x="1.8" y="0.6" width="1.6" height="2.2" rx=".6"/><rect x="5.2" y="0.6" width="1.6" height="2.2" rx=".6"/><rect x="8.6" y="0.6" width="1.6" height="2.2" rx=".6"/><rect x="2" y="5" width="8" height="1.2"/><rect x="2" y="8" width="8" height="1.2"/><rect x="2" y="11" width="8" height="1.2"/></g></svg>
<!-- paint -->
<svg style="left:388px;top:513px" width="16" height="17" viewBox="0 0 16 17"><defs><linearGradient id="g-pt" x1="0" y1="0" x2="1" y2="1"><stop offset="0" stop-color="#4fd0fc"/><stop offset="1" stop-color="#1a7fdc"/></linearGradient></defs><path d="M9,0.5 C13,0.5 15.8,3.5 15.8,7 C15.8,9.6 14.6,11.6 13.2,12.6 L11,12.6 L11,14.6 C9.8,15.9 8,16 7,15.2 C6,14.4 6.4,13 5.7,11.8 C5.1,11 3.6,11.6 2,11.2 C0.6,10.8 0,9.4 0.3,8 C1,3.6 4.6,0.5 9,0.5Z" fill="url(#g-pt)"/><rect x="2.2" y="7.2" width="1.8" height="1.8" fill="#e8330c"/><rect x="4.2" y="4.2" width="1.8" height="1.8" fill="#21a012"/><rect x="7.2" y="2.2" width="1.8" height="1.8" fill="#fdb910"/><rect x="7.2" y="8.2" width="1.8" height="1.8" fill="#fde3d6"/><rect x="11" y="7.8" width="2" height="8.2" fill="#a85a14"/><rect x="11.2" y="6.6" width="1.6" height="1.4" fill="#cfd8e0"/><path d="M10,4.8 H14 L13,6.8 H11 Z" fill="#f6d7a2"/></svg>
<!-- photos (rounded) -->
<svg style="left:389px;top:546px" width="14" height="14" viewBox="0 0 16 16"><defs><clipPath id="cp-ph"><rect x="0" y="0" width="16" height="16" rx="2.6"/></clipPath></defs><g clip-path="url(#cp-ph)"><rect x="0" y="0" width="16" height="16" fill="url(#g-ph)"/><path d="M0,13 L8,5.6 L16,13 V16 H0 Z" fill="#1e8fe6"/><path d="M0,12.4 L7.4,5.4 L9.6,7.6 L1.4,16 H0 Z" fill="#35c2f7"/><circle cx="11.8" cy="3.6" r="1.6" fill="#fff"/></g></svg>
<!-- show more -->
<svg style="left:389px;top:586.8px" width="14.2" height="14.2" viewBox="0 0 15 15" fill="none"><path d="M6.5,0.6 H3 A2.4,2.4 0 0 0 0.6,3 V12 A2.4,2.4 0 0 0 3,14.4 H12 A2.4,2.4 0 0 0 14.4,12 V8.5" stroke="#5a5a5a" stroke-width="1.1"/><path d="M0.8,8.6 H4.8 A1.8,1.8 0 0 1 6.6,10.4 V14.2 H3 A2.2,2.2 0 0 1 0.8,12 Z" fill="#fff" stroke="#5a5a5a" stroke-width="1"/><path d="M8.2,6.8 L14,1 M9.6,0.8 H14.2 V5.4" stroke="#0f7be0" stroke-width="1.2"/></svg>
<!-- submenu chevrons -->
<svg style="left:677px;top:155px" width="6" height="10" viewBox="0 0 6 10" fill="none" stroke="#555" stroke-width="1.1"><path d="M0.7,0.8 L4.7,4.8 L0.7,8.8"/></svg>
<svg style="left:677px;top:347px" width="6" height="10" viewBox="0 0 6 10" fill="none" stroke="#555" stroke-width="1.1"><path d="M0.7,0.8 L4.7,4.8 L0.7,8.8"/></svg>
<!-- tooltip -->
<div class="a" id="tip"></div>
<span class="t" style="left:616.6px;top:53px;font-size:12px;letter-spacing:-.1px">Delete (Delete)</span>
</body>
</html>
